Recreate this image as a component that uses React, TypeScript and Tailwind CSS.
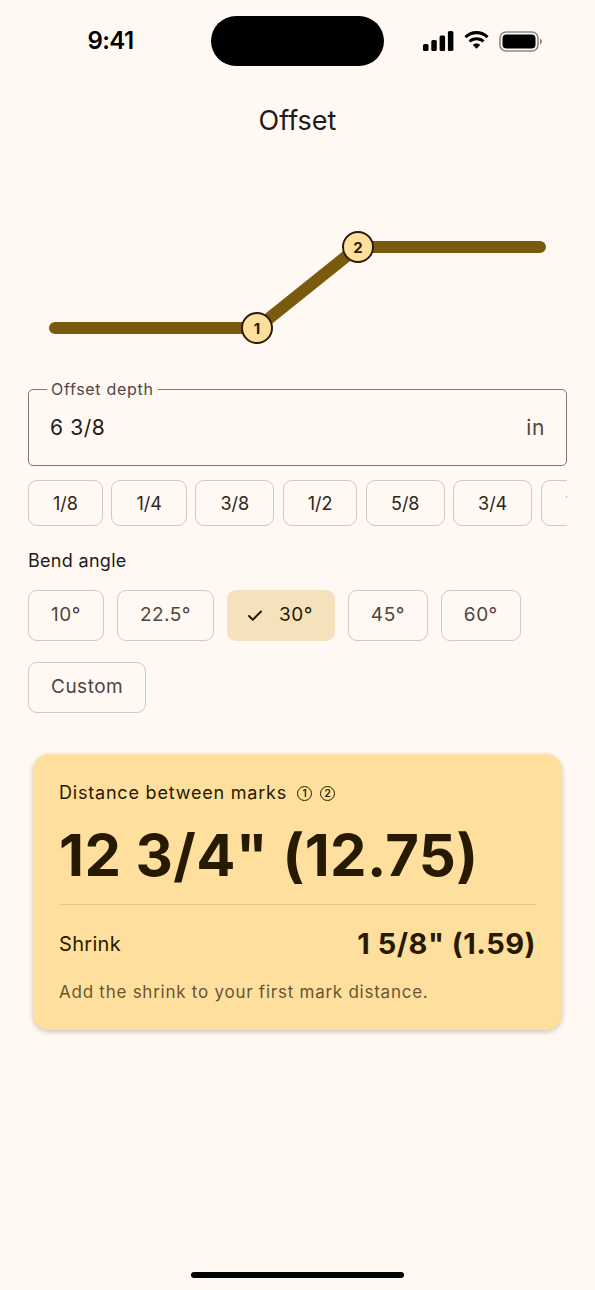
import React from 'react';
import { Check } from 'lucide-react';

const depthChips = ['1/8', '1/4', '3/8', '1/2', '5/8', '3/4', '7/8'];
const angles = ['10°', '22.5°', '30°', '45°', '60°', 'Custom'];

function StatusBar() {
  return (
    <div className="flex h-[82px] items-center">
      <div className="flex w-[211px] justify-center pl-[10px]">
        <span className="text-[24px] font-semibold tracking-tight text-black" style={{ fontFamily: 'Inter, sans-serif' }}>
          9:41
        </span>
      </div>
      <div className="h-[50px] w-[173px] rounded-full bg-black" />
      <div className="flex flex-1 items-center justify-center gap-[9px] pr-[14px]">
        {/* signal */}
        <svg width="31" height="20" viewBox="0 0 31 20">
          <rect x="0" y="13" width="5.5" height="7" rx="1.5" fill="#000" />
          <rect x="8.3" y="9" width="5.5" height="11" rx="1.5" fill="#000" />
          <rect x="16.6" y="4.5" width="5.5" height="15.5" rx="1.5" fill="#000" />
          <rect x="24.9" y="0" width="5.5" height="20" rx="1.5" fill="#000" />
        </svg>
        {/* wifi */}
        <svg width="27" height="20" viewBox="0 0 27 20">
          <path d="M13.5 3.2c3.9 0 7.4 1.5 10 4l2.1-2.2C22.4 1.9 18.2 0 13.5 0S4.6 1.9 1.4 5l2.1 2.2c2.6-2.5 6.1-4 10-4z" fill="#000" />
          <path d="M13.5 9.3c2.3 0 4.3.9 5.9 2.3l2.1-2.2c-2.1-2-4.9-3.2-8-3.2s-5.9 1.2-8 3.2l2.1 2.2c1.6-1.4 3.6-2.3 5.9-2.3z" fill="#000" />
          <path d="M13.5 12.5c-1.4 0-2.6.5-3.6 1.4l3.6 3.8 3.6-3.8c-1-.9-2.2-1.4-3.6-1.4z" fill="#000" />
        </svg>
        {/* battery */}
        <svg width="44" height="21" viewBox="0 0 44 21">
          <rect x="1" y="1" width="38" height="19" rx="6" fill="none" stroke="#8a8a8a" strokeWidth="1.6" />
          <rect x="3.5" y="3.5" width="33" height="14" rx="4" fill="#000" />
          <path d="M41 7.5v6c1.2-.4 2-1.7 2-3s-.8-2.6-2-3z" fill="#8a8a8a" />
        </svg>
      </div>
    </div>
  );
}

function BendDiagram() {
  return (
    <svg width="595" height="233" viewBox="0 0 595 233" className="block">
      <polyline
        points="55,191 257,191 358,110 540,110"
        fill="none"
        stroke="#7a5a0d"
        strokeWidth="12"
        strokeLinecap="round"
        strokeLinejoin="round"
      />
      <circle cx="257" cy="191" r="15" fill="#ffdf9e" stroke="#2a1c05" strokeWidth="2" />
      <text x="257" y="196.5" textAnchor="middle" fontSize="15" fontWeight="700" fill="#2a1c05" fontFamily="Inter, sans-serif">
        1
      </text>
      <circle cx="358" cy="110" r="15" fill="#ffdf9e" stroke="#2a1c05" strokeWidth="2" />
      <text x="358" y="115.5" textAnchor="middle" fontSize="15" fontWeight="700" fill="#2a1c05" fontFamily="Inter, sans-serif">
        2
      </text>
    </svg>
  );
}

function Mark({ n }: { n: string }) {
  return (
    <span className="inline-flex h-[15px] w-[15px] items-center justify-center rounded-full border-[1.5px] border-[#261a00] align-[-1px] text-[10px] leading-none font-semibold tracking-normal">
      {n}
    </span>
  );
}

export default function App() {
  return (
    <div className="relative flex h-[1290px] w-[595px] flex-col overflow-hidden bg-[#fff8f3] text-[#1f1b16]" style={{ fontFamily: 'Inter, "Noto Sans", sans-serif' }}>
      <StatusBar />

      <h1 className="mt-[23px] text-center text-[27px] leading-[32px] font-normal text-[#1f1b16]">Offset</h1>

      <BendDiagram />

      <div className="px-[28px]">
        {/* Offset depth field */}
        <fieldset className="mt-[10px] h-[86px] rounded-[5px] border border-[#7f7770] px-[18px]">
          <legend className="px-[4px] text-[16px] leading-[18px] tracking-[0.7px] text-[#4f4842]">Offset depth</legend>
          <div className="flex h-[67px] items-center justify-between pb-[7px] pl-[3px] pr-[3px]">
            <span className="text-[21px] tracking-[0.6px] text-[#1f1b16]">6 3/8</span>
            <span className="text-[21px] tracking-[0.6px] text-[#4f4842]">in</span>
          </div>
        </fieldset>

        {/* quick fractions */}
        <div className="mt-[14px] flex gap-[8.5px] overflow-hidden">
          {depthChips.map(c => (
            <div
              key={c}
              className="flex h-[46px] shrink-0 items-center rounded-[9px] border border-[#d7c8bb] px-[24px] text-[18px] text-[#2c2620]"
            >
              {c}
            </div>
          ))}
        </div>

        <div className="mt-[23px] text-[18px] leading-[24px] tracking-[0.3px] text-[#1f1b16]">Bend angle</div>

        <div className="mt-[17px] flex flex-wrap gap-x-[13px] gap-y-[21px]">
          {angles.map(a =>
            a === '30°' ? (
              <div
                key={a}
                className="flex h-[51px] items-center gap-[15px] rounded-[9px] bg-[#f6e1bd] pl-[19px] pr-[22px] text-[19px] tracking-[0.5px] text-[#261a04]"
              >
                <Check size={18} strokeWidth={2.6} />
                <span>{a}</span>
              </div>
            ) : (
              <div
                key={a}
                className="flex h-[51px] items-center rounded-[9px] border border-[#d7c8bb] px-[22px] text-[19px] tracking-[0.5px] text-[#4d4640]"
              >
                {a}
              </div>
            )
          )}
        </div>

        {/* result card */}
        <div className="mx-[5px] mt-[41px] rounded-[16px] bg-[#ffdf9e] px-[26px] pt-[27px] pb-[26px] shadow-[0_2px_5px_rgba(60,40,0,0.25)]">
          <div className="flex items-center gap-[6px] text-[18px] leading-[24px] tracking-[0.8px] text-[#261a00]">
            <span>Distance between marks</span>
            <span className="ml-[4px] flex gap-[8px]">
              <Mark n="1" />
              <Mark n="2" />
            </span>
          </div>
          <div className="mt-[20px] text-[58px] leading-[60px] font-bold tracking-[0.4px] text-[#261a00]">12 3/4" (12.75)</div>
          <div className="mt-[19px] h-px bg-[#e3c88c]" />
          <div className="mt-[24px] flex h-[30px] items-center justify-between">
            <span className="text-[20px] tracking-[0.3px] text-[#261a00]">Shrink</span>
            <span className="text-[29px] font-bold tracking-[0.5px] text-[#261a00]">1 5/8" (1.59)</span>
          </div>
          <div className="mt-[21px] text-[17px] leading-[24px] tracking-[0.75px] text-[#6a5530]">Add the shrink to your first mark distance.</div>
        </div>
      </div>

      <div className="mt-auto mb-[12px] flex justify-center">
        <div className="h-[6px] w-[213px] rounded-full bg-black" />
      </div>
    </div>
  );
}
